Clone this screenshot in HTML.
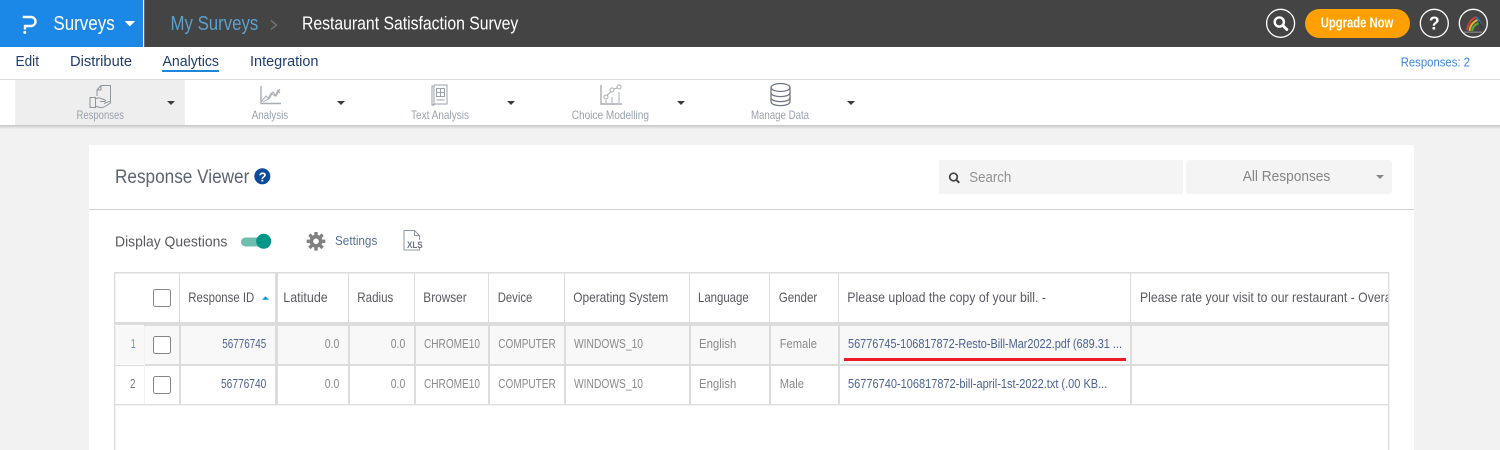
<!DOCTYPE html>
<html lang="en"><head><meta charset="utf-8"><title>Response Viewer</title>
<style>
html,body{margin:0;padding:0;background:#f2f2f2;width:1500px;height:450px;overflow:hidden}
svg{display:block;position:absolute;left:0;top:0}
text{font-family:"Liberation Sans",sans-serif;white-space:pre}
.n{font-size:15px;fill:#1f3d70}
.t{font-size:12px;fill:#98a2ae}
.h{font-size:14px;fill:#5a5a62}
.d{font-size:13px;fill:#8b8b8b}
.l{font-size:13px;fill:#4b6390}
</style></head><body>
<svg width="1500" height="450" viewBox="0 0 1500 450" xmlns="http://www.w3.org/2000/svg">
<defs>
<linearGradient id="sh" x1="0" y1="0" x2="0" y2="1"><stop offset="0" stop-color="#c4c4c4"/><stop offset="1" stop-color="#f2f2f2"/></linearGradient>
<clipPath id="c"><rect x="1132" y="273" width="256" height="50"/></clipPath>
</defs>
<rect width="1500" height="450" fill="#f2f2f2"/>
<!-- header -->
<rect width="1500" height="47" fill="#444444"/>
<rect width="143" height="47" fill="#1b87e6"/>
<rect x="143" width="1.2" height="47" fill="#fff"/>
<path d="M22.700 17H31a4.500 4.500 0 0 1 0 9h-6v3.500" fill="none" stroke="#fff" stroke-width="2.400"/>
<circle cx="24.800" cy="32.400" r="1.500" fill="#fff"/>
<text x="53.400" y="30" font-size="20" fill="#fff" textLength="61.300" lengthAdjust="spacingAndGlyphs">Surveys</text>
<path d="M124.600 21h10.600l-5.300 5.400z" fill="#fff"/>
<text x="170.500" y="30" font-size="20" fill="#5d9fcb" textLength="87.800" lengthAdjust="spacingAndGlyphs">My Surveys</text>
<path d="M271 20.500l5.500 4.500-5.500 4.500" fill="none" stroke="#777" stroke-width="1.300"/>
<text x="302" y="29.500" font-size="18" fill="#fff" textLength="216.300" lengthAdjust="spacingAndGlyphs">Restaurant Satisfaction Survey</text>
<!-- header right -->
<circle cx="1280.600" cy="23.300" r="14" fill="none" stroke="#fff" stroke-width="1.300"/>
<circle cx="1279.300" cy="22" r="4.600" fill="none" stroke="#fff" stroke-width="2.400"/>
<path d="M1282.800 25.500l4 4" stroke="#fff" stroke-width="3" stroke-linecap="round"/>
<rect x="1305" y="9" width="105" height="29" rx="14.500" fill="#ff9f00"/>
<text x="1320.700" y="27.500" font-size="14.500" font-weight="bold" fill="#fff" textLength="72.600" lengthAdjust="spacingAndGlyphs">Upgrade Now</text>
<circle cx="1434.300" cy="23.300" r="14" fill="none" stroke="#fff" stroke-width="1.300"/>
<text x="1428.800" y="29.500" font-size="18" font-weight="bold" fill="#fff">?</text>
<circle cx="1473.300" cy="23.300" r="14" fill="none" stroke="#fff" stroke-width="1.300"/>
<path d="M1467 30q2-10 9-13" fill="none" stroke="#d8402f" stroke-width="2"/>
<path d="M1469.500 31q1-8 8-11" fill="none" stroke="#e8b428" stroke-width="2"/>
<path d="M1472 31q1-6 7-8" fill="none" stroke="#58a83c" stroke-width="2"/>
<path d="M1475.500 17q4 2 6 9" fill="none" stroke="#2d6fb8" stroke-width="2"/>
<path d="M1479 22q2 3 3 7" fill="none" stroke="#3a3a3a" stroke-width="2"/>
<rect x="1464" y="31.500" width="18" height="1.500" fill="#777"/>
<!-- nav -->
<rect y="47" width="1500" height="32" fill="#fff"/>
<rect y="79" width="1500" height="1" fill="#dcdcdc"/>
<text class="n" x="15.500" y="66" textLength="23.500" lengthAdjust="spacingAndGlyphs">Edit</text>
<text class="n" x="70" y="66" textLength="62" lengthAdjust="spacingAndGlyphs">Distribute</text>
<text class="n" x="162.500" y="66" textLength="56.500" lengthAdjust="spacingAndGlyphs">Analytics</text>
<rect x="162" y="70" width="57" height="2" fill="#1a87d9"/>
<text class="n" x="250" y="66" textLength="68.500" lengthAdjust="spacingAndGlyphs">Integration</text>
<text x="1400.700" y="66.500" font-size="13" fill="#3d86e8" textLength="69.300" lengthAdjust="spacingAndGlyphs">Responses: 2</text>
<!-- toolbar -->
<rect y="125" width="1500" height="4" fill="url(#sh)"/>
<rect y="80" width="1500" height="45" fill="#fff"/>
<rect x="15" y="80" width="170" height="45" fill="#eeeeee"/>
<g fill="none" stroke="#8d959e" stroke-width="1">
<path d="M97 96V90l4-4.500h9.500V101M97 90h4v-4.500M90 97.500h5.500v10H90zM95.500 99q3-2 5.500-.5l4 1.500q1.500 1 -.5 1.500H100M95.500 106l4 1.500q3 .5 5.500-1l5.500-3.500q1-1.500-1.500-1.500l-5 2"/>
</g>
<g fill="none" stroke="#a8aeb5" stroke-width="1">
<path d="M261 86v17.500h20" stroke-width="1.400"/>
<path d="M261 102l5-6 3 3 4-7 3 4 4-7"/>
<path d="M263 102l5-3 3-6 4 3 3-6 2 3"/>
</g>
<g fill="none" stroke="#9aa1a9" stroke-width="1">
<path d="M432 86h2v19h-2zM434 85h13v19h-13l-2 1.500"/>
<rect x="436.500" y="88.500" width="8" height="8"/>
<path d="M440.500 88.500v8M436.500 92.500h8M436.500 100h8"/>
</g>
<g fill="none" stroke="#a8aeb5" stroke-width="1">
<path d="M601 85v19h21" stroke-width="1.400"/>
<circle cx="606" cy="97" r="2"/><circle cx="612" cy="90" r="2"/><circle cx="619" cy="87" r="2"/>
<path d="M607 95.500l4-4M614 89l3-1M606 100v3M612 97v6M619 92v11"/>
</g>
<g fill="none" stroke="#6f7983" stroke-width="1.300">
<ellipse cx="780.500" cy="87.500" rx="9.500" ry="4"/>
<path d="M771 87.500v14c0 5.500 19 5.500 19 0v-14M771 92.500c0 5.500 19 5.500 19 0M771 97.500c0 5.500 19 5.500 19 0"/>
</g>
<text class="t" x="76.500" y="119" textLength="47.500" lengthAdjust="spacingAndGlyphs">Responses</text>
<text class="t" x="251.700" y="119" textLength="36.500" lengthAdjust="spacingAndGlyphs">Analysis</text>
<text class="t" x="411" y="119" textLength="58" lengthAdjust="spacingAndGlyphs">Text Analysis</text>
<text class="t" x="571.700" y="119" textLength="77.300" lengthAdjust="spacingAndGlyphs">Choice Modelling</text>
<text class="t" x="751" y="119" textLength="58" lengthAdjust="spacingAndGlyphs">Manage Data</text>
<g fill="#3c3c3c">
<path d="M167 101h8l-4 4z"/><path d="M337 101h8l-4 4z"/><path d="M507 101h8l-4 4z"/><path d="M677 101h8l-4 4z"/><path d="M847 101h8l-4 4z"/>
</g>
<!-- card -->
<rect x="89" y="145" width="1325" height="305" fill="#fff"/>
<rect x="89" y="209" width="1325" height="1" fill="#cfcfcf"/>
<text x="115" y="183" font-size="19" fill="#5b6470" textLength="134.300" lengthAdjust="spacingAndGlyphs">Response Viewer</text>
<circle cx="262.300" cy="176.300" r="8" fill="#0b4a9c"/>
<text x="258.600" y="181.500" font-size="13" font-weight="bold" fill="#fff">?</text>
<rect x="939" y="160" width="244" height="34" fill="#f4f4f4"/>
<circle cx="953.500" cy="177" r="3.800" fill="none" stroke="#444" stroke-width="1.700"/>
<path d="M956.300 179.800l3 3" stroke="#444" stroke-width="2"/>
<text x="969.300" y="182" font-size="15" fill="#929292" textLength="42" lengthAdjust="spacingAndGlyphs">Search</text>
<rect x="1186" y="160" width="206" height="34" rx="3" fill="#f4f4f4"/>
<text x="1242.700" y="181" font-size="15" fill="#858585" textLength="87.600" lengthAdjust="spacingAndGlyphs">All Responses</text>
<path d="M1376 175h8l-4 4z" fill="#888"/>
<text x="115" y="246.500" font-size="15" fill="#5a5a5f" textLength="112.300" lengthAdjust="spacingAndGlyphs">Display Questions</text>
<rect x="241" y="237.500" width="28" height="9" rx="4.500" fill="#6fbcb0"/>
<circle cx="263.700" cy="241.300" r="7.500" fill="#009688"/>
<g fill="#808080">
<circle cx="316" cy="241.300" r="6.500"/>
<g stroke="#808080" stroke-width="3.400">
<path d="M316 232v18.600M306.700 241.300h18.600M309.400 234.700l13.200 13.200M322.600 234.700l-13.200 13.200"/>
</g>
<circle cx="316" cy="241.300" r="2.800" fill="#fff"/>
</g>
<text x="335" y="244.800" font-size="13" fill="#557099" textLength="42.300" lengthAdjust="spacingAndGlyphs">Settings</text>
<path d="M404 250V230.500h10.500l5 5V240M404 250h15.500v-2M414.500 230.500v5h5" fill="none" stroke="#8d98a6" stroke-width="1"/>
<rect x="407" y="240" width="16" height="8" fill="#fff"/>
<text x="407" y="247.800" font-size="9.500" font-weight="bold" fill="#6a7480" textLength="15.700" lengthAdjust="spacingAndGlyphs">XLS</text>
<!-- table -->
<rect x="114" y="272" width="1275" height="178" fill="#fff"/>
<rect x="115" y="326" width="1273" height="38" fill="#f8f8f8"/>
<g fill="#dcdcdc">
<rect x="114" y="272" width="1275" height="1.500"/>
<rect x="114" y="272" width="1.300" height="178"/>
<rect x="1388" y="272" width="1.300" height="178"/>
<rect x="115" y="322" width="1273" height="4"/>
<rect x="115" y="364" width="1273" height="2"/>
<rect x="115" y="404" width="1273" height="1.300"/>
<!-- header verticals -->
<rect x="179" y="273" width="1" height="49"/><rect x="275" y="273" width="3" height="49"/>
<rect x="348" y="273" width="1" height="49"/><rect x="414" y="273" width="1" height="49"/>
<rect x="488" y="273" width="1" height="49"/><rect x="564" y="273" width="1" height="49"/>
<rect x="689" y="273" width="1" height="49"/><rect x="769" y="273" width="1" height="49"/>
<rect x="838" y="273" width="1" height="49"/><rect x="1130" y="273" width="1" height="49"/>
<!-- row verticals -->
<rect x="179" y="326" width="2" height="78"/><rect x="275" y="326" width="3" height="78"/>
<rect x="348" y="326" width="2" height="78"/><rect x="414" y="326" width="2" height="78"/>
<rect x="488" y="326" width="2" height="78"/><rect x="564" y="326" width="2" height="78"/>
<rect x="689" y="326" width="2" height="78"/><rect x="769" y="326" width="2" height="78"/>
<rect x="838" y="326" width="2" height="78"/><rect x="1130" y="326" width="2" height="78"/>
<rect x="144" y="326" width="1" height="78"/>
</g>
<rect x="115" y="325" width="29" height="1" fill="#fff"/>
<rect x="115" y="364" width="30" height="1" fill="#fff"/>
<rect x="144" y="326" width="1" height="78" fill="#fff" opacity=".6"/>
<g fill="#fff" stroke="#858585" stroke-width="1">
<rect x="153.500" y="289.500" width="17" height="17" rx="2"/>
<rect x="153.500" y="336.500" width="17" height="17" rx="2"/>
<rect x="153.500" y="376.500" width="17" height="17" rx="2"/>
</g>
<text class="h" x="188.300" y="302" textLength="66" lengthAdjust="spacingAndGlyphs">Response ID</text>
<path d="M262 299.700l3.500-3.500 3.500 3.500z" fill="#0a94d6"/>
<text class="h" x="283.300" y="302" textLength="44.400" lengthAdjust="spacingAndGlyphs">Latitude</text>
<text class="h" x="357.300" y="302" textLength="36" lengthAdjust="spacingAndGlyphs">Radius</text>
<text class="h" x="423.300" y="302" textLength="43.400" lengthAdjust="spacingAndGlyphs">Browser</text>
<text class="h" x="497.700" y="302" textLength="34.600" lengthAdjust="spacingAndGlyphs">Device</text>
<text class="h" x="573.300" y="302" textLength="95" lengthAdjust="spacingAndGlyphs">Operating System</text>
<text class="h" x="698" y="302" textLength="50.700" lengthAdjust="spacingAndGlyphs">Language</text>
<text class="h" x="778.700" y="302" textLength="38.600" lengthAdjust="spacingAndGlyphs">Gender</text>
<text class="h" x="847.300" y="302" textLength="198.700" lengthAdjust="spacingAndGlyphs">Please upload the copy of your bill. -</text>
<g clip-path="url(#c)"><text class="h" x="1140" y="302" textLength="257" lengthAdjust="spacingAndGlyphs">Please rate your visit to our restaurant - Overall</text></g>
<!-- row 1 -->
<text x="130.800" y="348" font-size="13" fill="#5c93d6" textLength="5" lengthAdjust="spacingAndGlyphs">1</text>
<text class="l" x="222.300" y="348" textLength="44" lengthAdjust="spacingAndGlyphs">56776745</text>
<text class="d" x="324.700" y="348" textLength="14.600" lengthAdjust="spacingAndGlyphs">0.0</text>
<text class="d" x="390.700" y="348" textLength="14.600" lengthAdjust="spacingAndGlyphs">0.0</text>
<text class="d" x="424" y="348" textLength="56" lengthAdjust="spacingAndGlyphs">CHROME10</text>
<text class="d" x="498.300" y="348" textLength="57.400" lengthAdjust="spacingAndGlyphs">COMPUTER</text>
<text class="d" x="574" y="348" textLength="69" lengthAdjust="spacingAndGlyphs">WINDOWS_10</text>
<text class="d" x="699" y="348" textLength="37.300" lengthAdjust="spacingAndGlyphs">English</text>
<text class="d" x="779.700" y="348" textLength="37.300" lengthAdjust="spacingAndGlyphs">Female</text>
<text class="l" x="848" y="348" textLength="274" lengthAdjust="spacingAndGlyphs">56776745-106817872-Resto-Bill-Mar2022.pdf (689.31 ...</text>
<rect x="844" y="358" width="282" height="3" fill="#ed1c24"/>
<!-- row 2 -->
<text x="130" y="388" font-size="13" fill="#777" textLength="5.500" lengthAdjust="spacingAndGlyphs">2</text>
<text class="l" x="221" y="388" textLength="45.300" lengthAdjust="spacingAndGlyphs">56776740</text>
<text class="d" x="324.700" y="388" textLength="14.600" lengthAdjust="spacingAndGlyphs">0.0</text>
<text class="d" x="390.700" y="388" textLength="14.600" lengthAdjust="spacingAndGlyphs">0.0</text>
<text class="d" x="424" y="388" textLength="56" lengthAdjust="spacingAndGlyphs">CHROME10</text>
<text class="d" x="498.300" y="388" textLength="57.400" lengthAdjust="spacingAndGlyphs">COMPUTER</text>
<text class="d" x="574" y="388" textLength="69" lengthAdjust="spacingAndGlyphs">WINDOWS_10</text>
<text class="d" x="699" y="388" textLength="37.300" lengthAdjust="spacingAndGlyphs">English</text>
<text class="d" x="779.700" y="388" textLength="24.300" lengthAdjust="spacingAndGlyphs">Male</text>
<text class="l" x="848" y="388" textLength="259.300" lengthAdjust="spacingAndGlyphs">56776740-106817872-bill-april-1st-2022.txt (.00 KB...</text>
</svg>
</body></html>
